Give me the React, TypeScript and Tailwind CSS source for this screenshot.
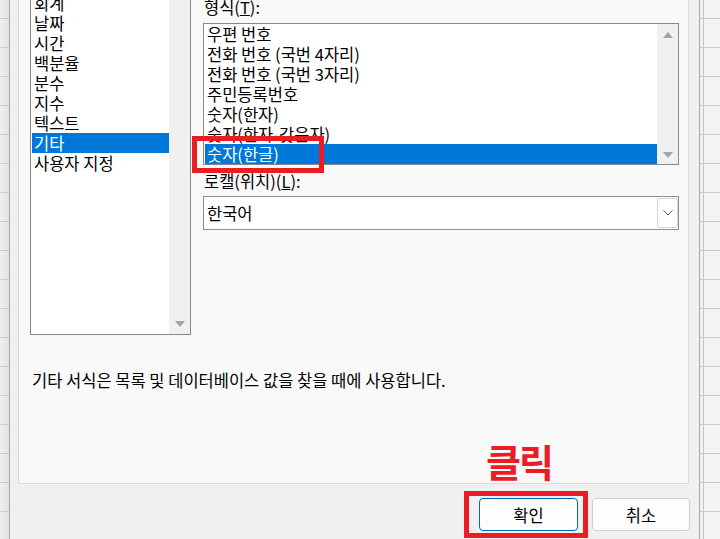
import React from 'react';

const gridRows = [19, 29, 29, 29, 29, 29, 29, 29, 29, 29, 29, 29, 29, 29, 29, 29, 29, 29, 29, 29];

function GridCol({ className }: { className: string }) {
  return (
    <div className={`flex flex-col shrink-0 ${className}`}>
      {gridRows.map((h, i) => (
        <div key={i} className={`shrink-0 border-b border-[#c9c9c9] ${i === 0 ? 'h-[19px]' : 'h-[29px]'}`} />
      ))}
    </div>
  );
}

const leftItems = ['회계', '날짜', '시간', '백분율', '분수', '지수', '텍스트', '기타', '사용자 지정'];
const typeItems = [
  '우편 번호',
  '전화 번호 (국번 4자리)',
  '전화 번호 (국번 3자리)',
  '주민등록번호',
  '숫자(한자)',
  '숫자(한자-갖은자)',
  '숫자(한글)',
];

function ArrowDown() {
  return (
    <svg width="10" height="6" viewBox="0 0 10 6">
      <path d="M0 0 L10 0 L5 6 Z" fill="#a3a3a3" />
    </svg>
  );
}
function ArrowUp() {
  return (
    <svg width="10" height="6" viewBox="0 0 10 6">
      <path d="M0 6 L10 6 L5 0 Z" fill="#a3a3a3" />
    </svg>
  );
}

export default function App() {
  return (
    <div className="relative w-[720px] h-[539px] overflow-hidden flex bg-[#f0f0f0] text-black font-['Noto_Sans_CJK_KR','Noto_Sans',sans-serif]">
      {/* left spreadsheet strip */}
      <GridCol className="w-[9px] bg-gradient-to-r from-[#f0f0f0] to-[#e1e1e1]" />

      {/* dialog */}
      <div className="w-[691px] shrink-0 h-[539px] border-x border-[#a9a9a9] bg-[#f0f0f0] flex flex-col">
        {/* tab panel */}
        <div className="ml-[8px] w-[671px] h-[484px] border-x border-b border-[#dadada] bg-[#f9f9f9] flex flex-col">
          <div className="flex">
            {/* category list */}
            <div className="ml-[11px] w-[161px] h-[335px] border-x border-b border-[#898989] bg-white flex overflow-hidden">
              <div className="flex-1 pl-px">
                <div className="-mt-[7px] flex flex-col">
                  {leftItems.map((t, i) => (
                    <div
                      key={t}
                      className={`h-[20px] leading-[20px] text-[16.5px] pl-[2px] whitespace-pre ${
                        i === 7 ? 'bg-[#0078d7] text-white' : ''
                      }`}
                    >
                      {t}
                    </div>
                  ))}
                </div>
              </div>
              <div className="w-[21px] bg-[#f0f0f0] flex flex-col justify-end items-center pb-[7px]">
                <ArrowDown />
              </div>
            </div>

            {/* right column */}
            <div className="ml-[12px] w-[476px] flex flex-col -mt-[3px]">
              <div className="h-[20px] leading-[20px] text-[16.5px] pl-[1px]">
                형식(<span className="underline">T</span>):
              </div>
              <div className="mt-[6px] h-[142px] border border-[#898989] bg-white flex">
                <div className="flex-1 pl-px">
                  {typeItems.map((t, i) => (
                    <div
                      key={t}
                      className={`h-[20px] leading-[20px] text-[16.5px] pl-[2px] whitespace-pre ${
                        i === 6 ? 'bg-[#0078d7] text-white' : ''
                      }`}
                    >
                      {t}
                    </div>
                  ))}
                </div>
                <div className="w-[21px] bg-[#f0f0f0] flex flex-col justify-between items-center pt-[8px] pb-[6px]">
                  <ArrowUp />
                  <ArrowDown />
                </div>
              </div>
              <div className="mt-[6px] h-[20px] leading-[20px] text-[16.5px] pl-[1px]">
                로캘(위치)(<span className="underline">L</span>):
              </div>
              <div className="mt-[5px] h-[34px] border border-[#8d8d8d] bg-white flex items-center">
                <div className="flex-1 pl-[3px] text-[16.5px] leading-[20px]">한국어</div>
                <div className="h-[30px] w-[21px] border border-[#d6d6d6] rounded-[2px] bg-white flex items-center justify-center">
                  <svg width="10" height="6" viewBox="0 0 10 6">
                    <path d="M0.5 0.5 L5 5 L9.5 0.5" fill="none" stroke="#555555" strokeWidth="1" />
                  </svg>
                </div>
              </div>
            </div>
          </div>

          <div className="mt-[35px] pl-[13px] h-[20px] leading-[20px] text-[16.5px]">
            기타 서식은 목록 및 데이터베이스 값을 찾을 때에 사용합니다.
          </div>
        </div>

        {/* footer */}
        <div className="flex justify-end gap-[14px] pt-[14px] pr-[9px]">
          <button className="w-[99px] h-[33px] border border-[#0067c0] rounded-[4px] bg-[#fdfdfd] text-[16.5px] leading-[20px]">
            확인
          </button>
          <button className="w-[98px] h-[33px] border border-[#d0d0d0] rounded-[4px] bg-[#fdfdfd] text-[16.5px] leading-[20px]">
            취소
          </button>
        </div>
      </div>

      {/* right spreadsheet strip */}
      <GridCol className="w-[4px] border-r border-[#c6c6c6] bg-[#f0f0f0]" />
      <GridCol className="w-[16px] bg-[#f3f3f3]" />

      {/* annotations */}
      <div className="absolute left-[192px] top-[136px] w-[132px] h-[37px] border-[5px] border-[#ec1c24]" />
      <div className="absolute left-[464px] top-[491px] w-[124px] h-[47px] border-[5px] border-[#ec1c24]" />
      <div className="absolute left-[486px] top-[442px] text-[38px] leading-none font-bold tracking-[-2px] text-[#ec1c24]">
        클릭
      </div>
    </div>
  );
}
